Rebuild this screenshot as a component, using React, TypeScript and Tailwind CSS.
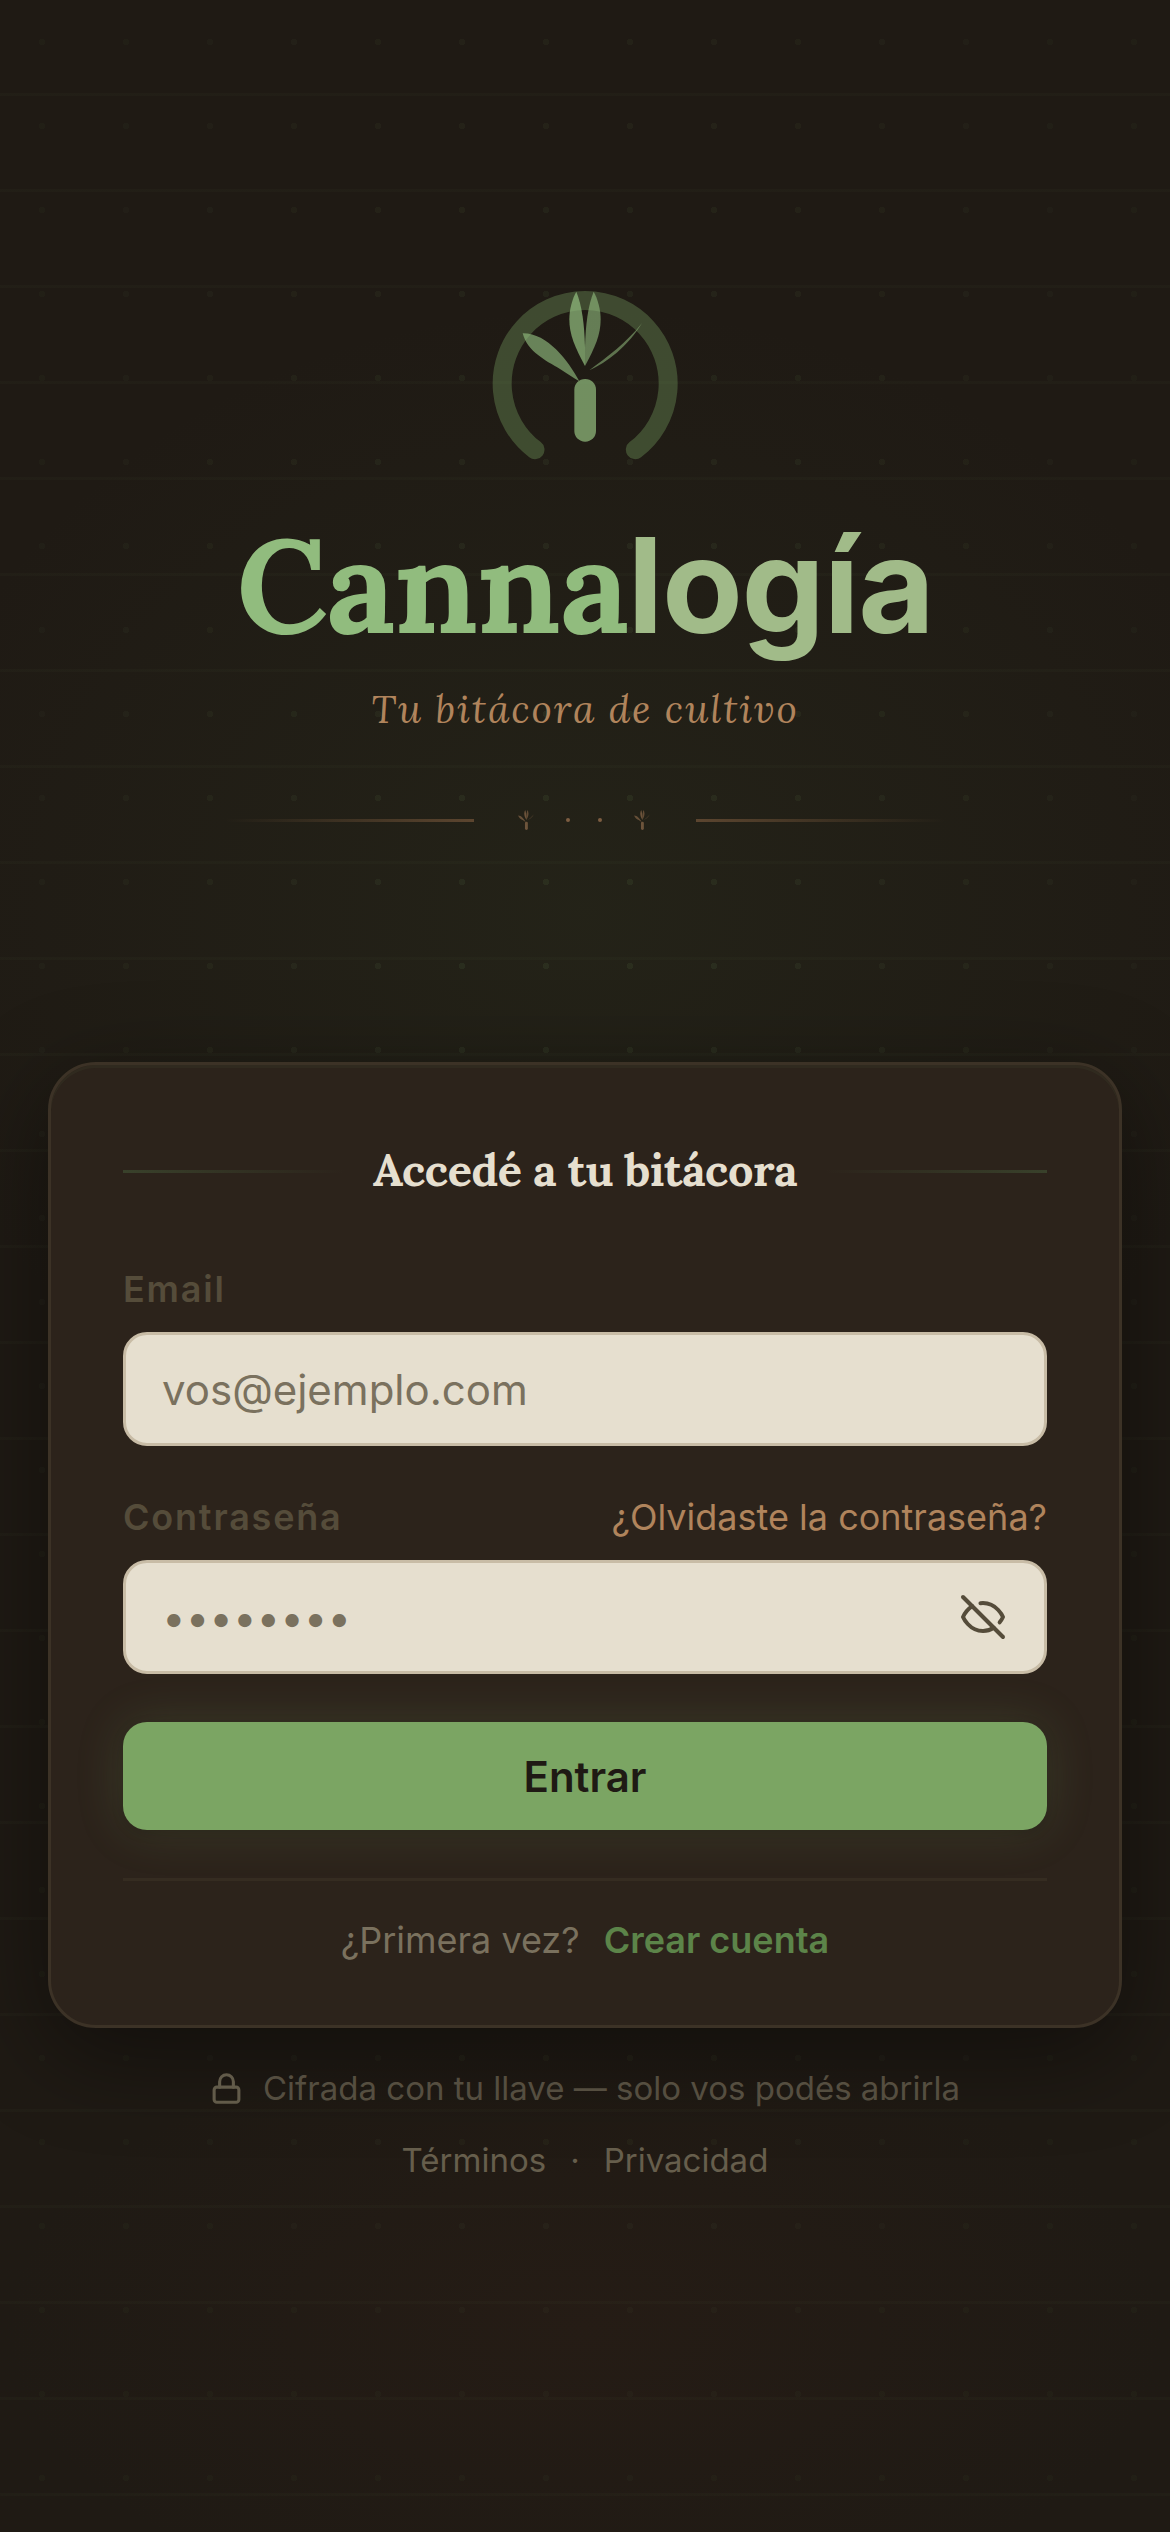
import { useState } from 'react'
import { Lock } from 'lucide-react'

const serif = "font-['Lora','Liberation_Serif',serif]"

function Plant() {
  return (
    <g>
      <rect x="343" y="357" width="65" height="188" rx="32" opacity="0.72" />
      <path d="M375 318C345 262 328 225 328 178C328 148 337 116 349 95C366 138 373 190 375 262Z" opacity="0.72" />
      <path d="M375 318C405 262 422 225 422 178C422 148 413 116 401 95C384 138 377 190 375 262Z" opacity="0.62" />
      <path d="M358 364C325 302 262 219 188 220C202 275 258 302 300 327C322 341 342 354 358 364Z" opacity="0.65" />
      <path d="M388 331C440 292 500 248 546 189C505 258 440 308 388 331Z" opacity="0.55" />
    </g>
  )
}

function Logo() {
  return (
    <svg viewBox="90 90 570 510" className="h-[170px] w-[190px]" fill="#91bc7e" aria-hidden="true">
      <path
        d="M225 569A249 249 0 1 1 526 569"
        fill="none"
        stroke="#7ba563"
        strokeWidth="57"
        strokeLinecap="round"
        opacity="0.35"
      />
      <Plant />
    </svg>
  )
}

function Sprout() {
  return (
    <svg viewBox="188 95 357 450" className="h-5 w-4" fill="#8a6849" aria-hidden="true">
      <Plant />
    </svg>
  )
}

function EyeClosed() {
  return (
    <svg
      viewBox="0 0 24 24"
      className="size-12"
      fill="none"
      stroke="currentColor"
      strokeWidth="2"
      strokeLinecap="round"
      strokeLinejoin="round"
      aria-hidden="true"
    >
      <path d="M10.73 5.08A10.43 10.43 0 0 1 12 5c7 0 10 7 10 7a13.16 13.16 0 0 1-1.67 2.68" />
      <path d="M6.61 6.61A13.526 13.526 0 0 0 2 12s3 7 10 7a9.74 9.74 0 0 0 5.39-1.61" />
      <path d="m2 2 20 20" />
    </svg>
  )
}

const fieldClass =
  'h-[114px] w-full rounded-3xl border-[3px] border-[#c8bca6] bg-[#e6dfcf] px-9 text-[42px] text-[#2c231b] placeholder:text-[#7a715e] focus:outline-none'

export default function App() {
  const [email, setEmail] = useState('')
  const [password, setPassword] = useState('')
  const [visible, setVisible] = useState(false)

  return (
    <div className="relative isolate flex min-h-screen flex-col items-center overflow-hidden bg-[#1f1a14] px-12 pt-[290px] pb-20 font-['Inter',sans-serif]">
      {/* Background */}
      <div className="absolute inset-0 -z-10 bg-[radial-gradient(ellipse_60%_24%_at_50%_36%,rgba(60,80,45,0.16),transparent),radial-gradient(ellipse_50%_12%_at_50%_92%,rgba(90,45,30,0.1),transparent)]" />
      <div className="absolute inset-0 -z-10 bg-[repeating-linear-gradient(to_bottom,transparent_0_93px,rgba(123,165,99,0.03)_93px_96px)]" />
      <div className="absolute inset-0 -z-10 bg-[radial-gradient(circle,rgba(123,165,99,0.1)_3px,transparent_3px)] bg-size-[84px_84px] mask-[radial-gradient(ellipse_at_50%_40%,black,rgba(0,0,0,0.35)_70%)]" />

      {/* Brand */}
      <header className="flex w-full flex-col items-center">
        <Logo />
        <h1 className="mt-[50px] flex items-baseline text-[132px] leading-[150px] font-bold tracking-[-0.01em]">
          <span className={`${serif} text-[#91bc7e]`}>Canna</span>
          <span className="text-[#a1bb89]">logía</span>
        </h1>
        <p className={`${serif} mt-[22px] text-[39px] leading-[54px] tracking-wider text-[#b0845c] italic`}>Tu bitácora de cultivo</p>
        <div className="mt-[74px] flex w-full max-w-[720px] items-center">
          <span className="h-[3px] flex-1 bg-linear-to-r from-transparent to-[#5c452f]" />
          <div className="flex items-center gap-8 pr-[46px] pl-11">
            <Sprout />
            <div className="flex gap-7">
              <span className="size-1 rounded-full bg-[#7d5d41]" />
              <span className="size-1 rounded-full bg-[#7d5d41]" />
            </div>
            <Sprout />
          </div>
          <span className="h-[3px] flex-1 bg-linear-to-l from-transparent to-[#5c452f]" />
        </div>
      </header>

      {/* Login card */}
      <main className="mt-[232px] w-full rounded-[48px] border-[3px] border-[#3c3226] bg-[#2c231b] px-[72px] pt-[72px] pb-[58px] shadow-[0_24px_96px_rgba(0,0,0,0.45),inset_0_3px_0_rgba(123,165,99,0.06)]">
        <div className="flex items-center gap-7">
          <span className="h-[3px] flex-1 bg-linear-to-r from-[#39412b] to-transparent" />
          <h2 className={`${serif} pb-1 text-[45px] leading-[65px] font-bold tracking-[-0.01em] text-[#e6dfcf]`}>Accedé a tu bitácora</h2>
          <span className="h-[3px] flex-1 bg-linear-to-l from-[#39412b] to-transparent" />
        </div>

        <form onSubmit={(e) => e.preventDefault()}>
          <label htmlFor="email" className="mt-14 block text-[36px] leading-[54px] font-semibold tracking-wider text-[#554c3a]">
            Email
          </label>
          <input
            id="email"
            type="email"
            placeholder="vos@ejemplo.com"
            value={email}
            onChange={(e) => setEmail(e.target.value)}
            className={`${fieldClass} mt-4 block`}
          />

          <div className="mt-11 flex items-center justify-between text-[36px] leading-[54px]">
            <label htmlFor="password" className="font-semibold tracking-wider text-[#554c3a]">
              Contraseña
            </label>
            <a href="#recuperar" className="text-[#b0845c]">¿Olvidaste la contraseña?</a>
          </div>
          <div className="relative mt-4">
            <input
              id="password"
              type={visible ? 'text' : 'password'}
              placeholder="••••••••"
              value={password}
              onChange={(e) => setPassword(e.target.value)}
              className={`${fieldClass} block pr-28`}
            />
            <button
              type="button"
              onClick={() => setVisible(!visible)}
              aria-label="Mostrar contraseña"
              className="absolute inset-y-0 right-0 flex items-center px-10 text-[#554c3a]"
            >
              <EyeClosed />
            </button>
          </div>

          <button
            type="submit"
            className="mt-12 block h-[108px] w-full rounded-3xl bg-[#7ba563] text-[42px] font-semibold text-[#1f1a14] shadow-[0_3px_12px_rgba(0,0,0,0.15),0_0_48px_rgba(123,165,99,0.2)]"
          >
            Entrar
          </button>
        </form>

        <div className="mt-12 flex items-center justify-center gap-6 border-t-[3px] border-[#352c21] pt-8 text-[36px] leading-[54px]">
          <span className="text-[#7a715e]">¿Primera vez?</span>
          <a href="#registro" className="font-semibold text-[#5c8449]">Crear cuenta</a>
        </div>
      </main>

      {/* Footer */}
      <footer className="mt-9 flex flex-col items-center gap-6 text-[33px] leading-[48px]">
        <p className="flex items-center gap-5 text-[#554e40]">
          <Lock className="size-[33px] text-[#625b4a]" strokeWidth={2.25} />
          Cifrada con tu llave — solo vos podés abrirla
        </p>
        <nav className="flex items-center gap-6 text-[#665e4c]">
          <a href="#terminos">Términos</a>
          <span>·</span>
          <a href="#privacidad">Privacidad</a>
        </nav>
      </footer>
    </div>
  )
}
